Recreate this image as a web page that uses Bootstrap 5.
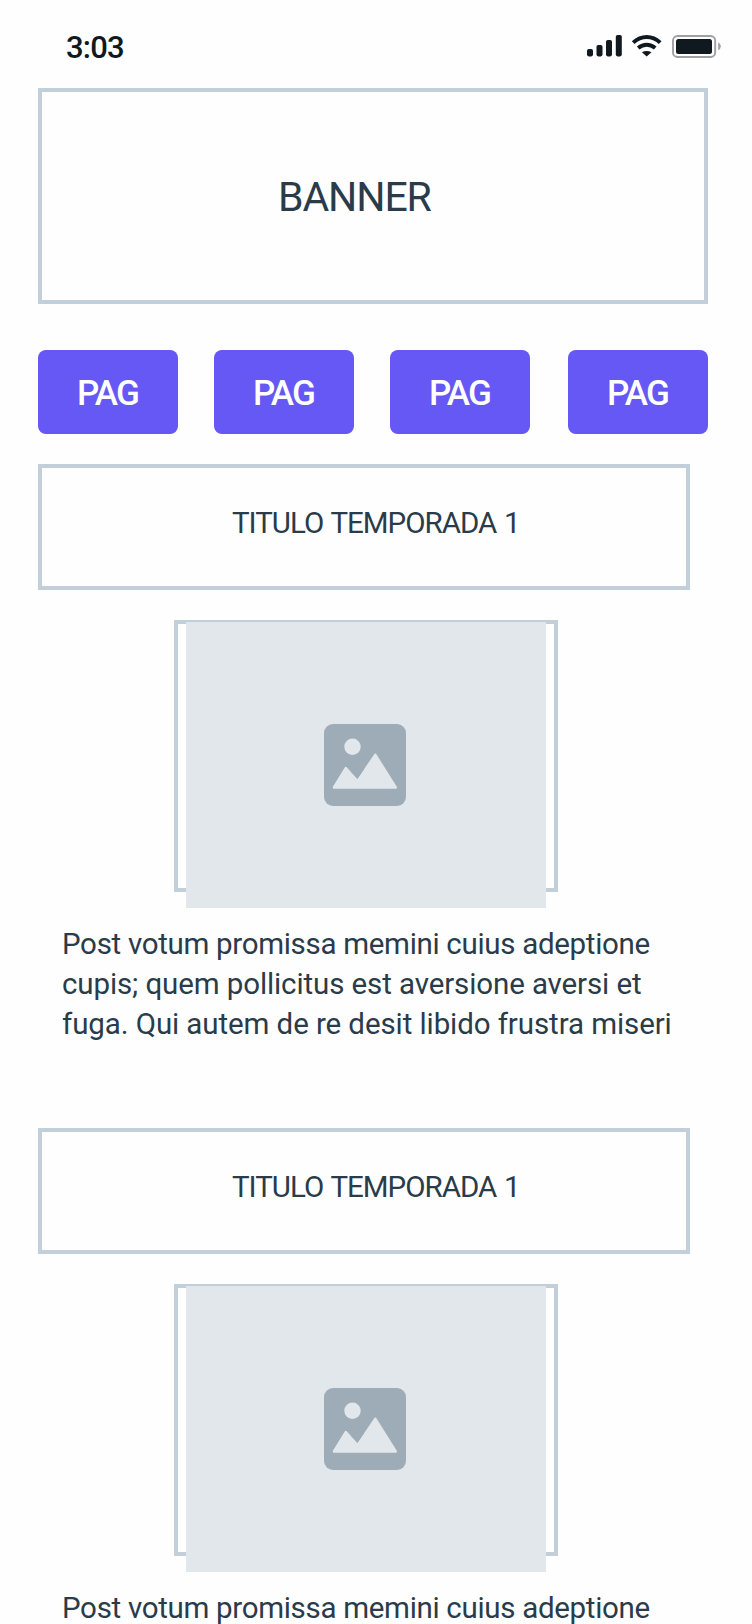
<!DOCTYPE html>
<html lang="es">
<head>
<meta charset="utf-8">
<meta name="viewport" content="width=device-width, initial-scale=1">
<title>Temporadas</title>
<link href="https://cdn.jsdelivr.net/npm/bootstrap@5.3.0/dist/css/bootstrap.min.css" rel="stylesheet">
<style>
  body { background: #fefefe; color: #2a3b49; font-family: Roboto, "Liberation Sans", sans-serif; }
  .screen { width: 752px; height: 1624px; padding-left: 38px; }
  .status { height: 88px; padding-left: 28px; padding-bottom: 40px; color: #101820; }
  .clock { font-size: 31px; font-weight: 500; line-height: 40px; letter-spacing: -.8px; margin-top: 28px; }
  .status svg { width: 136px; height: 26px; margin: 33px 30px 0 0; }
  .frame { border: 4px solid #c2ced8; }
  .banner { width: 670px; height: 216px; padding: 0 0 0 236px; margin-bottom: 46px; font-size: 41px; letter-spacing: -1.1px; line-height: 210px; }
  .pages { width: 670px; margin-bottom: 30px; }
  .btn-pag { width: 140px; height: 84px; padding: 1px 0 0 39px; border: 0; border-radius: 8px; background: #6558f5; color: #fff; font-size: 35px; font-weight: 500; line-height: 86px; letter-spacing: -1.9px; }
  .btn-pag:nth-child(4) { margin-left: 2px; }
  .btn-pag:hover { background: #5548e0; color: #fff; }
  .season { height: 664px; }
  .season-title { width: 652px; height: 126px; margin-bottom: 30px; padding-left: 190px; font-size: 29.5px; line-height: 110px; letter-spacing: -1px; word-spacing: 1.5px; font-weight: 400; }
  .thumb { width: 384px; height: 272px; margin-left: 136px; }
  .picture { width: 360px; height: 286px; margin: -2px 0 0 8px; padding-right: 2px; background: #e2e7eb; }
  .picture svg { width: 82px; height: 82px; }
  .text-copy { margin: 32px 0 0 24px; font-size: 29.5px; line-height: 40px; }
  .l1 { letter-spacing: -.31px; }
  .l2 { letter-spacing: -.11px; }
  .l3 { letter-spacing: -.09px; }
</style>
</head>
<body>
<svg class="d-none" aria-hidden="true">
  <symbol id="photo" viewBox="0 0 82 82">
    <rect width="82" height="82" rx="9" fill="#9eacb8"/>
    <circle cx="28.5" cy="22.7" r="8.2" fill="#e2e7eb"/>
    <path d="M10 63.5 21.8 44.2 33.5 57.2 51.3 30.9 71.7 63.5Z" fill="#e2e7eb" stroke="#e2e7eb" stroke-width="2.6" stroke-linejoin="round"/>
    <path d="M27.5 48.2 33.5 54.5 40 45.2V35H27.5Z" fill="#9eacb8"/>
  </symbol>
</svg>
<div class="screen overflow-hidden">
  <header class="status d-flex justify-content-between align-items-start">
    <span class="clock">3:03</span>
    <svg viewBox="586 33 136 26" aria-label="Estado">
      <g fill="#101820">
        <rect x="587" y="49" width="6" height="7.4" rx="1.8"/>
        <rect x="596.5" y="45" width="6" height="11.4" rx="1.8"/>
        <rect x="606" y="40" width="6" height="16.4" rx="1.8"/>
        <rect x="615.8" y="35" width="6" height="21.4" rx="1.8"/>
        <path d="M646.7 56.4 641.9 52.3Q646.7 49.9 651.5 52.3Z"/>
        <rect x="676" y="39" width="36" height="15" rx="2.5"/>
      </g>
      <g fill="none" stroke="#101820" stroke-width="4">
        <path d="M633.2 42.6Q639.3 37 646.7 37T660.2 42.6"/>
        <path d="M638.2 48Q642.2 44.8 646.7 44.8T655.2 48"/>
      </g>
      <rect x="673" y="36" width="42.2" height="21" rx="4.5" fill="none" stroke="#a0a0a2" stroke-width="1.9"/>
      <path d="M718.2 42.2Q720.8 43.6 720.8 46.2T718.2 50.2Z" fill="#a0a0a2"/>
    </svg>
  </header>

  <section class="banner frame">BANNER</section>

  <nav class="pages d-flex justify-content-between">
    <a class="btn btn-pag text-start" href="#">PAG</a>
    <a class="btn btn-pag text-start" href="#">PAG</a>
    <a class="btn btn-pag text-start" href="#">PAG</a>
    <a class="btn btn-pag text-start" href="#">PAG</a>
  </nav>

  <article class="season">
    <h2 class="season-title frame">TITULO TEMPORADA 1</h2>
    <div class="thumb frame"><div class="picture d-flex align-items-center justify-content-center"><svg><use href="#photo"/></svg></div></div>
    <p class="text-copy text-nowrap">
      <span class="l1 d-block">Post votum promissa memini cuius adeptione</span>
      <span class="l2 d-block">cupis; quem pollicitus est aversione aversi et</span>
      <span class="l3 d-block">fuga. Qui autem de re desit libido frustra miseri</span>
    </p>
  </article>

  <article class="season">
    <h2 class="season-title frame">TITULO TEMPORADA 1</h2>
    <div class="thumb frame"><div class="picture d-flex align-items-center justify-content-center"><svg><use href="#photo"/></svg></div></div>
    <p class="text-copy text-nowrap">
      <span class="l1 d-block">Post votum promissa memini cuius adeptione</span>
    </p>
  </article>
</div>
</body>
</html>
